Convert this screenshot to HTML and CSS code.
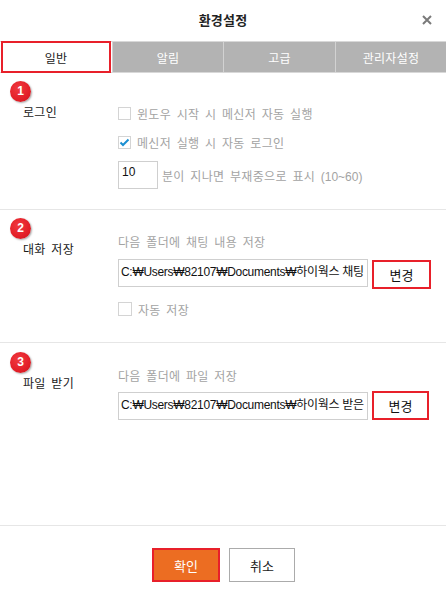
FILE: index.html
```html
<!DOCTYPE html>
<html lang="ko">
<head>
<meta charset="utf-8">
<link rel="stylesheet" href="styles.css">
</head>
<body>
<div class="dialog">
  <div class="header">
    <div class="title">환경설정</div>
    <div class="close">
      <svg width="10" height="10" viewBox="0 0 10 10"><path d="M1 1L9 9M9 1L1 9" stroke="#7a7a7a" stroke-width="2"/></svg>
    </div>
  </div>
  <div class="tabs">
    <div class="tab active">일반</div>
    <div class="tab">알림</div>
    <div class="tab">고급</div>
    <div class="tab">관리자설정</div>
  </div>

  <div class="section s1">
    <div class="label-col"><span class="label"><span class="badge">1</span>로그인</span></div>
    <div class="content">
      <div class="row"><span class="cb"></span><span class="muted">윈도우 시작 시 메신저 자동 실행</span></div>
      <div class="row r2"><span class="cb checked"><svg width="11" height="9" viewBox="0 0 11 9"><path d="M1.5 4.5L4 7L9.5 1.5" fill="none" stroke="#1b8fd2" stroke-width="2"/></svg></span><span class="muted">메신저 실행 시 자동 로그인</span></div>
      <div class="row r3"><span class="num">10</span><span class="muted">분이 지나면 부재중으로 표시 <span class="latin">(10~60)</span></span></div>
    </div>
  </div>

  <div class="section s2">
    <div class="label-col"><span class="label"><span class="badge">2</span>대화 저장</span></div>
    <div class="content">
      <div class="muted heading">다음 폴더에 채팅 내용 저장</div>
      <div class="pathrow">
        <div class="path">C:₩Users₩82107₩Documents₩하이웍스 채팅</div>
        <div class="change">변경</div>
      </div>
      <div class="row r4"><span class="cb"></span><span class="muted">자동 저장</span></div>
    </div>
  </div>

  <div class="section s3">
    <div class="label-col"><span class="label"><span class="badge">3</span>파일 받기</span></div>
    <div class="content">
      <div class="muted heading">다음 폴더에 파일 저장</div>
      <div class="pathrow">
        <div class="path">C:₩Users₩82107₩Documents₩하이웍스 받은</div>
        <div class="change">변경</div>
      </div>
    </div>
  </div>

  <div class="footer">
    <div class="btn ok">확인</div>
    <div class="btn cancel">취소</div>
  </div>
</div>
</body>
</html>
```

FILE: styles.css
```css
* { box-sizing: border-box; }
html, body { margin: 0; padding: 0; background: #fff; }
body {
  font-family: "Noto Sans CJK KR", "Noto Sans", sans-serif;
  font-size: 12px;
  color: #222;
  word-spacing: 2px;
}
.dialog {
  width: 446px;
  height: 601px;
  display: flex;
  flex-direction: column;
}
.header {
  height: 41px;
  position: relative;
  display: flex;
  align-items: center;
  justify-content: center;
}
.title {
  font-size: 13px;
  font-weight: bold;
  color: #222;
  margin-top: -2px;
  letter-spacing: 0.2px;
}
.close {
  position: absolute;
  right: 14px;
  top: 15px;
  width: 10px;
  height: 10px;
  display: flex;
}
.tabs {
  display: grid;
  grid-template-columns: 112px 111px 112px 111px;
  height: 32px;
  border-top: 1px solid #d8d8d8;
  border-bottom: 1px solid #d8d8d8;
}
.tab {
  background: #b3b3b3;
  color: #fff;
  display: flex;
  align-items: center;
  justify-content: center;
  border-left: 1px solid #d2d2d2;
  letter-spacing: 0.3px;
}
.tab.active {
  background: #fff;
  color: #222;
  border: 2px solid #e8202a;
  margin: -1px 1px -1px 1px;
}
.section {
  display: grid;
  grid-template-columns: 118px 1fr;
  border-bottom: 1px solid #e6e6e6;
}
.label-col { padding-left: 23px; }
.label {
  position: relative;
  display: inline-block;
  line-height: 14px;
  letter-spacing: 0.3px;
  color: #1a1a1a;
}
.badge {
  position: absolute;
  left: -13px;
  top: -24px;
  width: 21px;
  height: 21px;
  border-radius: 50%;
  background: radial-gradient(circle at 40% 35%, #f03a40 0%, #e31f28 60%, #c8141c 100%);
  box-shadow: 1px 1px 2px rgba(0,0,0,0.35);
  color: #fff;
  font-family: "Liberation Sans", Arial, sans-serif;
  font-weight: bold;
  font-size: 12px;
  line-height: 21px;
  text-align: center;
  letter-spacing: 0;
}
.muted { color: #a3a3a3; letter-spacing: 0.3px; }
.latin { font-family: "Liberation Sans", Arial, sans-serif; letter-spacing: 0; }
.row {
  display: flex;
  align-items: center;
  height: 14px;
}
.cb {
  width: 13px;
  height: 13px;
  border: 1px solid #d4d4d4;
  background: #fff;
  margin-right: 6px;
  display: flex;
  align-items: center;
  justify-content: center;
  flex: none;
}
.s1 { height: 137px; }
.s1 .label-col { padding-top: 30px; }
.s1 .content { padding-top: 33px; }
.r2 { margin-top: 15px; }
.r3 { margin-top: 12px; height: 28px; }
.num {
  width: 40px;
  height: 28px;
  border: 1px solid #cfcfcf;
  padding: 3px 0 0 3px;
  color: #111;
  font-family: "Liberation Sans", Arial, sans-serif;
  font-size: 12px;
  line-height: 14px;
  margin-right: 4px;
}
.heading { line-height: 14px; }
.pathrow {
  display: flex;
  align-items: flex-start;
  margin-top: 10px;
}
.path {
  width: 250px;
  height: 28px;
  border: 1px solid #cfcfcf;
  padding: 0 0 0 2px;
  line-height: 24px;
  white-space: nowrap;
  overflow: hidden;
  color: #111;
  font-family: "Liberation Sans", "Noto Sans CJK KR", sans-serif;
  font-size: 12px;
  word-spacing: 0;
  letter-spacing: -0.3px;
}
.change {
  width: 59px;
  height: 29px;
  margin-left: 4px;
  margin-top: 1px;
  border: 2px solid #e8202a;
  display: flex;
  align-items: center;
  justify-content: center;
  font-size: 13px;
  color: #111;
}
.s2 { height: 133px; }
.s2 .label-col { padding-top: 30px; }
.s2 .content { padding-top: 25px; }
.r4 { margin-top: 13px; }
.r4 .cb { width: 14px; height: 14px; }
.s3 { flex: 1; }
.s3 .label-col { padding-top: 31px; }
.s3 .content { padding-top: 26px; }
.s3 .pathrow { margin-top: 9px; }
.s3 .change { margin-top: -1px; width: 57px; }
.footer {
  height: 75px;
  display: flex;
  justify-content: center;
  align-items: flex-start;
  padding-top: 22px;
  gap: 9px;
  padding-left: 1px;
}
.btn {
  height: 34px;
  display: flex;
  align-items: center;
  justify-content: center;
  font-size: 13px;
}
.ok {
  width: 68px;
  background: #ec6d22;
  border: 2px solid #e8202a;
  color: #fff;
}
.cancel {
  width: 66px;
  border: 1px solid #ababab;
  color: #222;
  background: #fff;
}
```
